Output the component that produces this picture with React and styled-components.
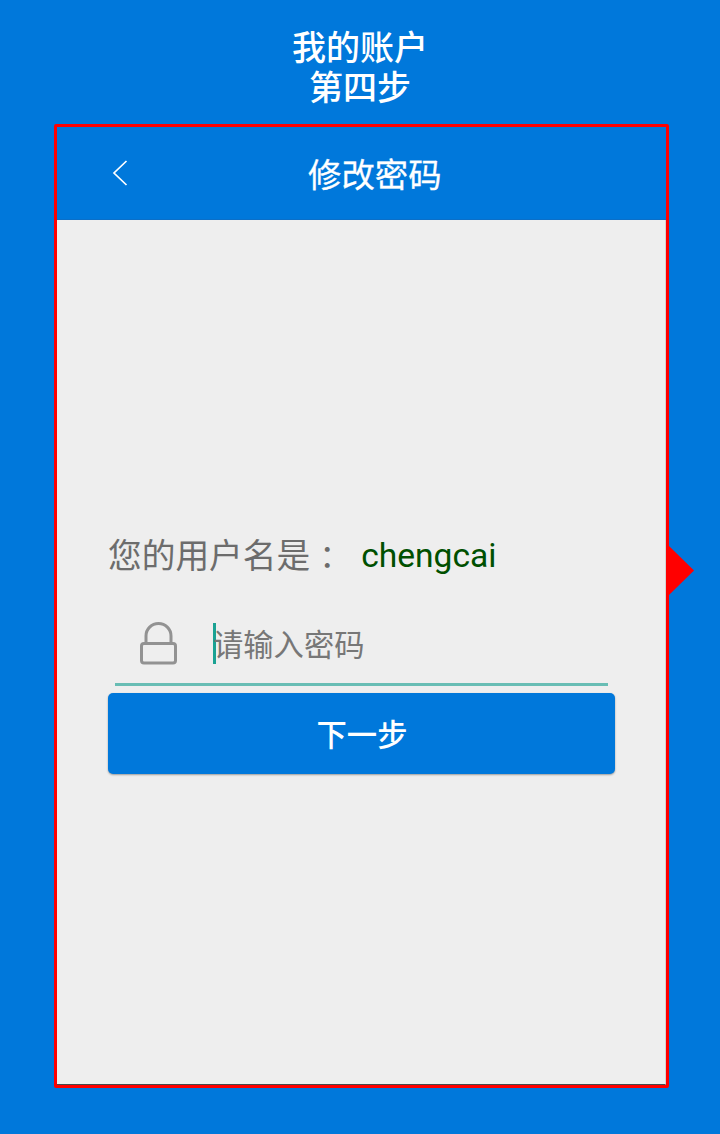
import React from 'react';
import styled, { createGlobalStyle } from 'styled-components';

const GlobalStyle = createGlobalStyle`
  * { box-sizing: border-box; }
  body {
    margin: 0;
    background: #0078db;
    font-family: Roboto, "Noto Sans CJK SC", sans-serif;
  }
`;

const Page = styled.main`
  height: 1134px;
  padding: 26px 51px 0 54px;
  background: #0078db;
`;

const StepTitle = styled.h1`
  margin: 0 0 18px;
  padding-right: 3px;
  color: #fff;
  font: 500 34px/40px "Noto Sans CJK SC", sans-serif;
  text-align: center;
`;

const Phone = styled.section`
  position: relative;
  height: 964px;
  display: flex;
  flex-direction: column;
  border: 3px solid #f00;
  border-radius: 2px;
`;

const Pointer = styled.svg`
  position: absolute;
  left: 612px;
  top: 419px;
  width: 25px;
  height: 49px;
`;

const Header = styled.header`
  height: 93px;
  display: flex;
  align-items: center;
  background: #0078db;
  border-bottom: 1px solid #0b6fc8;
`;

const BackIcon = styled.svg`
  width: 16px;
  height: 26px;
  margin-left: 55px;
`;

const HeaderTitle = styled.h2`
  margin: 0 0 1px 180px;
  color: #fff;
  font: 400 33.4px/40px "Noto Sans CJK SC", sans-serif;
  -webkit-text-stroke: 0.3px #fff;
`;

const Content = styled.div`
  flex: 1;
  display: flex;
  flex-direction: column;
  padding: 311px 50px 0 51px;
  background: #eee;
  border-right: 1px solid #d4d4d4;
  border-bottom: 1px solid #4a4a4a;
`;

const UserRow = styled.div`
  display: flex;
  align-items: center;
  height: 46px;
  color: #6c6c6c;
  font: 400 33.7px/46px "Noto Sans CJK SC", sans-serif;
  white-space: nowrap;
`;

const Colon = styled.span`
  margin: 2px 0 0 1px;
  font-family: "Noto Sans CJK TC", sans-serif;
  font-size: 32px;
`;

const UserName = styled.span`
  margin: 4px 0 0 18px;
  color: #005000;
  font: 400 33.6px/46px Roboto, sans-serif;
`;

const Field = styled.div`
  height: 109px;
  margin: 0 7px;
  display: flex;
  align-items: center;
  border-bottom: 3px solid #68bdb4;
`;

const LockIcon = styled.svg`
  width: 40px;
  height: 46px;
  margin: 27px 0 0 24px;
`;

const Caret = styled.span`
  width: 3px;
  height: 41px;
  margin: 26px -3px 0 34px;
  background: #1aa293;
`;

const Placeholder = styled.span`
  margin-top: 25px;
  color: #777;
  font: 400 30.3px/40px "Noto Sans CJK SC", sans-serif;
`;

const NextButton = styled.button`
  height: 81px;
  margin-top: 7px;
  padding: 0 0 2px 1px;
  border: 0;
  border-radius: 5px;
  background: #0078db;
  box-shadow: 0 1px 2px rgba(0, 0, 0, 0.35);
  color: #fff;
  font: 500 30.3px/40px "Noto Sans CJK SC", sans-serif;
`;

export default function App() {
  return (
    <Page>
      <GlobalStyle />
      <StepTitle>我的账户<br />第四步</StepTitle>
      <Phone>
        <Header>
          <BackIcon viewBox="0 0 16 26" fill="none" stroke="#fff" strokeWidth="1.7">
            <path d="M14.5 1 2 13 14.5 25" />
          </BackIcon>
          <HeaderTitle>修改密码</HeaderTitle>
        </Header>
        <Content>
          <UserRow>
            您的用户名是<Colon lang="zh-TW">：</Colon>
            <UserName>chengcai</UserName>
          </UserRow>
          <Field>
            <LockIcon viewBox="0 0 40 46" fill="none" stroke="#929292" strokeWidth="3">
              <rect x="2.5" y="22.5" width="34" height="19.5" rx="2.5" />
              <path d="M7 22V15a12.5 12.5 0 0 1 25 0V22" />
            </LockIcon>
            <Caret />
            <Placeholder>请输入密码</Placeholder>
          </Field>
          <NextButton type="button">下一步</NextButton>
        </Content>
        <Pointer viewBox="0 0 25 49">
          <path d="M0 0 25 24.5 0 49z" fill="#f00" />
        </Pointer>
      </Phone>
    </Page>
  );
}
